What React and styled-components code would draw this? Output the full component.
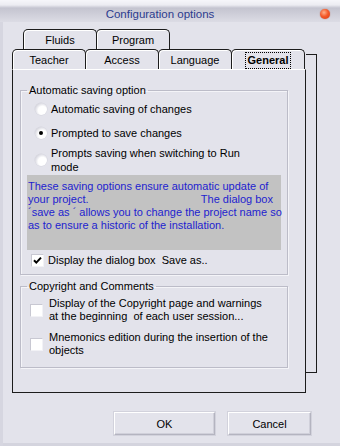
import React from "react";
import styled, { createGlobalStyle } from "styled-components";

const Global = createGlobalStyle`
  html, body { margin: 0; padding: 0; background: #e3e3eb; }
  body { width: 340px; height: 446px; overflow: hidden; font-family: "Liberation Sans", Arial, sans-serif; font-size: 11px; color: #000; }
  * { box-sizing: border-box; }
`;

const Window = styled.div`
  width: 340px;
  height: 446px;
  background: #e3e3eb;
  box-shadow: inset 3px 0 0 #d6d6e0, inset 0 -3px 0 #d4d4de;
  display: flex;
  flex-direction: column;
`;

const TitleBar = styled.div`
  height: 22px;
  display: flex;
  align-items: center;
  padding: 5px 10px 0 20px;
  background: linear-gradient(to bottom, #f6f6fa 0, #ececf2 5px, #c4c4d0 8px, #d0d0da 15px, #dcdce5 22px);
`;

const Title = styled.div`
  flex: 1;
  text-align: center;
  color: #2c3b8e;
  font-size: 11.5px;
  line-height: 14px;
  padding-right: 20px;
`;

const CloseDot = styled.div`
  width: 10px;
  height: 10px;
  border-radius: 50%;
  background: radial-gradient(circle at 40% 35%, #ffb08a 0, #f45a2a 45%, #d8380e 100%);
  box-shadow: 0 0 1px #b04020;
`;

const Content = styled.div`
  padding: 7px 0 0 12px;
  display: flex;
  flex-direction: column;
`;

const TabControl = styled.div`
  display: flex;
  align-items: flex-start;
`;

const Main = styled.div`
  width: 294px;
  display: flex;
  flex-direction: column;
`;

const TabRow = styled.div`
  display: flex;
  height: 20px;
  padding-left: ${(p) => p.$indent}px;
`;

const Tab = styled.div`
  width: 74px;
  height: 20px;
  margin-left: -1px;
  &:first-child { margin-left: 0; }
  border: 1px solid #1c1c1c;
  border-bottom: none;
  border-radius: 5px 5px 0 0;
  background: #e3e3eb;
  box-shadow: inset 1px 1px 0 #ffffff;
  display: flex;
  align-items: center;
  justify-content: center;
  font-size: 11px;
  line-height: 13px;
  padding-top: 1px;
  font-weight: ${(p) => (p.$active ? "bold" : "normal")};
`;

const Focus = styled.span`
  outline: 1px dotted #000;
  outline-offset: 1px;
  padding: 0 1px;
`;

const Panel = styled.div`
  height: 324px;
  border: 1px solid #1c1c1c;
  border-top: 1px solid #ffffff;
  background: #e3e3eb;
  padding: 14px 17px 0 7px;
  display: flex;
  flex-direction: column;
`;

const Strip = styled.div`
  width: 11px;
  height: 319px;
  margin-top: 25px;
  border: 1px solid #1c1c1c;
  border-left: none;
  background: #e3e3eb;
`;

const Group = styled.fieldset`
  margin: ${(p) => p.$mt || 0}px 0 0 0;
  padding: 0 0 ${(p) => p.$pb}px 0;
  border: 1px solid #bcbcc8;
  box-shadow: 1px 1px 0 #f4f4f8, inset 1px 1px 0 #f4f4f8;
  min-width: 0;
  width: 268px;
  display: flex;
  flex-direction: column;
`;

const Legend = styled.legend`
  margin-left: 6px;
  padding: 0 2px;
  line-height: 13px;
  font-size: 11px;
`;

const OptionRow = styled.div`
  display: flex;
  align-items: center;
  margin-top: ${(p) => p.$mt}px;
  padding-left: ${(p) => p.$pl}px;
  gap: ${(p) => p.$gap}px;
`;

const Radio = styled.span`
  width: 12px;
  height: 12px;
  border-radius: 50%;
  flex: none;
  background: radial-gradient(circle at 62% 62%, #ffffff 40%, #e4e4ea 62%, #b8b8c2 100%);
  box-shadow: 0 0 0 0.5px #d4d4dc;
  display: flex;
  align-items: center;
  justify-content: center;
  &::after {
    content: "";
    width: 4px;
    height: 4px;
    border-radius: 50%;
    background: ${(p) => (p.$checked ? "#000" : "transparent")};
  }
`;

const Box = styled.span`
  width: 13px;
  height: 13px;
  flex: none;
  background: #ffffff;
  border-top: 1px solid #c8c8d2;
  border-left: 1px solid #c8c8d2;
  border-right: 1px solid #f2f2f6;
  border-bottom: 1px solid #f2f2f6;
  display: flex;
  align-items: center;
  justify-content: center;
`;

const Label = styled.span`
  line-height: ${(p) => p.$lh || 14}px;
  font-size: 11px;
`;

const Info = styled.div`
  margin: 1px 0 0 6px;
  width: 254px;
  height: 75px;
  background: #c2c2c2;
  color: #1e1ecf;
  padding: 5px 8px 0 1px;
  font-size: 11px;
  line-height: 13px;
`;

const InfoLine = styled.div`
  white-space: nowrap;
  display: flex;
  justify-content: ${(p) => (p.$spread ? "space-between" : "flex-start")};
`;

const ButtonRow = styled.div`
  display: flex;
  justify-content: flex-end;
  gap: 13px;
  margin-top: 19px;
  padding-right: 29px;
`;

const Button = styled.div`
  width: ${(p) => p.$w}px;
  height: 23px;
  border: 1px solid;
  border-color: #ffffff #b4b4c0 #b4b4c0 #ffffff;
  box-shadow: 0 0 0 1px #d2d2dc, inset -1px -1px 0 #d0d0da;
  background: #e3e3eb;
  display: flex;
  align-items: center;
  justify-content: center;
  font-size: 11px;
  padding-top: 1px;
`;

const Check = () => (
  <svg width="11" height="11" viewBox="0 0 11 11">
    <path d="M2 5.2 L4.3 7.6 L9 2.6" fill="none" stroke="#000" strokeWidth="2" />
  </svg>
);

export default function App() {
  return (
    <>
      <Global />
      <Window>
        <TitleBar>
          <Title>Configuration options</Title>
          <CloseDot />
        </TitleBar>
        <Content>
          <TabControl>
            <Main>
              <TabRow $indent={11}>
                <Tab>Fluids</Tab>
                <Tab>Program</Tab>
              </TabRow>
              <TabRow $indent={0}>
                <Tab>Teacher</Tab>
                <Tab>Access</Tab>
                <Tab>Language</Tab>
                <Tab $active>
                  <Focus>General</Focus>
                </Tab>
              </TabRow>
              <Panel>
                <Group $pb={7}>
                  <Legend>Automatic saving option</Legend>
                  <OptionRow $mt={5} $pl={14} $gap={4}>
                    <Radio />
                    <Label>Automatic saving of changes</Label>
                  </OptionRow>
                  <OptionRow $mt={10} $pl={14} $gap={4}>
                    <Radio $checked />
                    <Label>Prompted to save changes</Label>
                  </OptionRow>
                  <OptionRow $mt={6} $pl={14} $gap={4}>
                    <Radio />
                    <Label>
                      Prompts saving when switching to Run
                      <br />
                      mode
                    </Label>
                  </OptionRow>
                  <Info>
                    <InfoLine>These saving options ensure automatic update of</InfoLine>
                    <InfoLine $spread>
                      <span>your project.</span>
                      <span>The dialog box</span>
                    </InfoLine>
                    <InfoLine>´save as ´ allows you to change the project name so</InfoLine>
                    <InfoLine>as to ensure a historic of the installation.</InfoLine>
                  </Info>
                  <OptionRow $mt={3} $pl={10} $gap={4}>
                    <Box>
                      <Check />
                    </Box>
                    <Label>Display the dialog box&nbsp; Save as..</Label>
                  </OptionRow>
                </Group>
                <Group $mt={5} $pb={10}>
                  <Legend>Copyright and Comments</Legend>
                  <OptionRow $mt={4} $pl={9} $gap={6}>
                    <Box />
                    <Label $lh={13}>
                      Display of the Copyright page and warnings
                      <br />
                      at the beginning&nbsp; of each user session...
                    </Label>
                  </OptionRow>
                  <OptionRow $mt={8} $pl={9} $gap={6}>
                    <Box />
                    <Label $lh={13}>
                      Mnemonics edition during the insertion of the
                      <br />
                      objects
                    </Label>
                  </OptionRow>
                </Group>
              </Panel>
            </Main>
            <Strip />
          </TabControl>
          <ButtonRow>
            <Button $w={101}>OK</Button>
            <Button $w={83}>Cancel</Button>
          </ButtonRow>
        </Content>
      </Window>
    </>
  );
}
